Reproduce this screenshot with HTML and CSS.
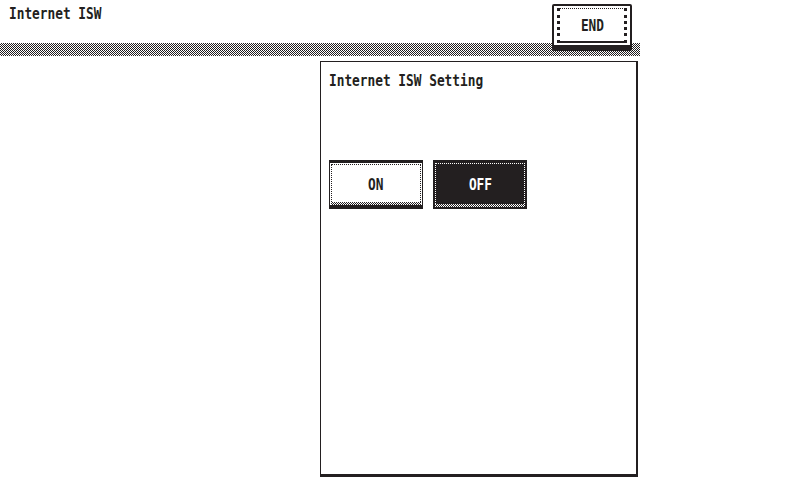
FILE: index.html
```html
<!DOCTYPE html>
<html lang="en">

<head>
    <meta charset="UTF-8">
    <meta name="viewport" content="width=device-width, initial-scale=1.0">
    <title>Internet ISW</title>

    <link rel="stylesheet" href="styles.css">
</head>

<body>
    <main>
        <div class="header">
            <span class="lcd">Internet ISW</span>
            <button class="end-btn"><span class="lcd">END</span></button>
        </div>

        <div class="band"></div>

        <div class="panel">
            <div class="panel-title"><span class="lcd">Internet ISW Setting</span></div>

            <div class="options">
                <button class="opt"><span class="lcd">ON</span></button>
                <button class="opt selected"><span class="lcd">OFF</span></button>
            </div>
        </div>
    </main>
</body>

</html>
```

FILE: styles.css
```css
body {
    margin: 0;
    background: #ffffff;
    color: #231f20;
}

main {
    width: 800px;
    height: 480px;
    position: relative;
    overflow: hidden;
}

/* narrow panel font */
.lcd {
    display: inline-block;
    font-family: "DejaVu Sans Mono", monospace;
    font-size: 16px;
    font-weight: bold;
    line-height: 16px;
    transform: scaleX(.8);
    transform-origin: left center;
    white-space: nowrap;
}

.header {
    height: 43px;
    box-sizing: border-box;
    padding: 5px 0 0 9px;
}

.band {
    width: 640px;
    height: 13px;
    background-image: repeating-conic-gradient(#231f20 0 25%, #ffffff 0 50%);
    background-size: 2px 2px;
}

.end-btn {
    position: absolute;
    left: 552px;
    top: 4px;
    width: 80px;
    height: 47px;
    box-sizing: border-box;
    padding: 0;
    background: #ffffff;
    border: 2px solid #231f20;
    border-bottom-width: 6px;
    border-radius: 2px;
    color: #231f20;
    cursor: pointer;
}

.end-btn::before {
    content: "";
    position: absolute;
    left: 3px;
    right: 3px;
    top: 2px;
    bottom: 2px;
    border-left: 3px dotted #231f20;
    border-right: 3px dotted #231f20;
    border-top: 1px dotted #231f20;
    border-bottom: 2px solid #231f20;
}

.end-btn .lcd,
.opt .lcd {
    transform-origin: center;
}

.panel {
    margin: 5px 0 0 320px;
    width: 318px;
    height: 416px;
    box-sizing: border-box;
    border: 1px solid #231f20;
    border-right-width: 2px;
    border-bottom-width: 3px;
    padding: 10px 0 0 8px;
}

.panel-title {
    height: 88px;
}

.options {
    display: flex;
    gap: 10px;
}

.opt {
    position: relative;
    width: 94px;
    height: 49px;
    box-sizing: border-box;
    padding: 2px 0 0;
    background: #ffffff;
    border: 1px solid #231f20;
    border-top-width: 3px;
    border-bottom-width: 4px;
    color: #231f20;
    cursor: pointer;
}

.opt::before {
    content: "";
    position: absolute;
    left: 1px;
    right: 1px;
    top: 1px;
    bottom: 3px;
    border: 1px dotted #231f20;
    border-bottom: none;
}

.opt::after {
    content: "";
    position: absolute;
    left: 1px;
    right: 1px;
    bottom: 0;
    height: 3px;
    background-image: repeating-conic-gradient(#231f20 0 25%, #ffffff 0 50%);
    background-size: 2px 2px;
}

.opt.selected {
    background: #231f20;
    color: #ffffff;
    border-top-width: 1px;
    border-bottom-width: 2px;
    border-style: dotted;
}

.opt.selected::before {
    border-color: #ffffff;
    top: 2px;
}
```
